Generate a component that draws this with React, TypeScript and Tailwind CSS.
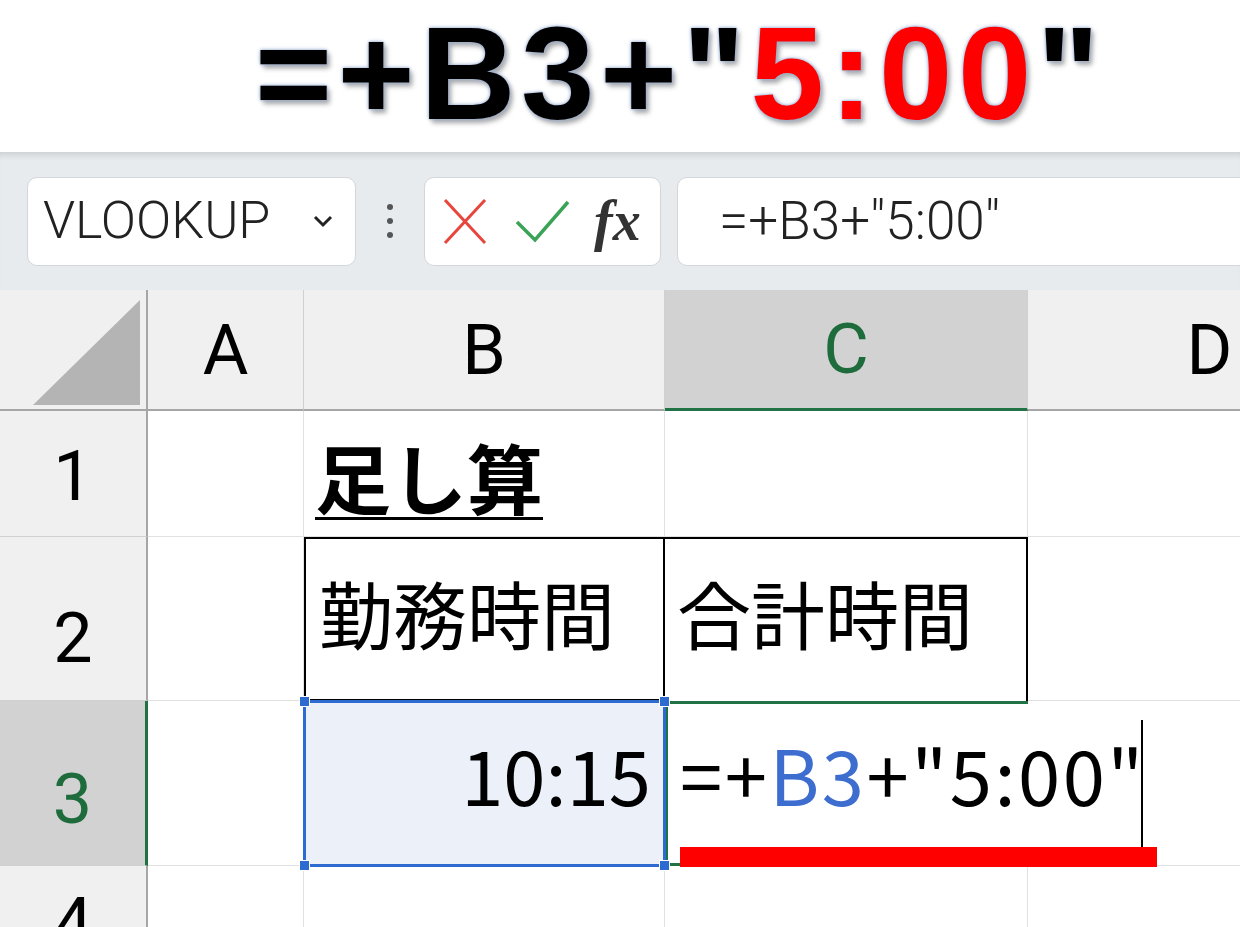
const cellFont = "font-['Noto_Sans_CJK_JP',sans-serif]"
const uiFont = "font-['Roboto','Noto_Sans',sans-serif]"

function Title() {
  return (
    <div className="h-[152px] pl-[255px] pt-[8px]">
      <div className="font-['Liberation_Sans',sans-serif] text-[132px] font-bold leading-none tracking-[5.5px] text-black [text-shadow:0_0_2px_#9fb3d6,0_0_4px_#9fb3d6,3px_4px_5px_rgba(0,0,0,0.35)]">
        =+B3+&quot;<span className="text-[#ff0000]">5:00</span>&quot;
      </div>
    </div>
  )
}

function FormulaBar() {
  return (
    <div className="flex h-[138px] items-center bg-[#e8ebee] pl-[27px] shadow-[inset_0_7px_6px_-4px_rgba(0,0,0,0.12)]">
      <div className="flex h-[89px] w-[329px] shrink-0 items-center justify-between rounded-[10px] border border-[#d3d6da] bg-white pl-[15px] pr-[22px]">
        <span className={`${uiFont} text-[52px] font-light leading-none text-[#222]`}>VLOOKUP</span>
        <svg width="20" height="13" viewBox="0 0 20 13">
          <polyline points="2,2 10,10 18,2" fill="none" stroke="#222" strokeWidth="3" />
        </svg>
      </div>

      <div className="flex w-[68px] shrink-0 flex-col items-center gap-[8px]">
        <span className="h-[6px] w-[6px] rounded-full bg-[#555]" />
        <span className="h-[6px] w-[6px] rounded-full bg-[#555]" />
        <span className="h-[6px] w-[6px] rounded-full bg-[#555]" />
      </div>

      <div className="flex h-[89px] w-[237px] shrink-0 items-center rounded-[10px] border border-[#d3d6da] bg-white pl-[18px]">
        <svg width="44" height="47" viewBox="0 0 44 47">
          <line x1="2" y1="2" x2="42" y2="45" stroke="#e8453c" strokeWidth="3" />
          <line x1="42" y1="2" x2="2" y2="45" stroke="#e8453c" strokeWidth="3" />
        </svg>
        <svg width="55" height="44" viewBox="0 0 55 44" className="ml-[28px]">
          <polyline points="2,23 20,41 53,3" fill="none" stroke="#3aa357" strokeWidth="3.5" />
        </svg>
        <span className="ml-[24px] font-['Liberation_Serif',serif] text-[56px] font-bold italic leading-none text-[#333]">
          fx
        </span>
      </div>

      <div className="ml-[16px] flex h-[89px] w-[700px] shrink-0 items-center rounded-l-[10px] border border-[#d3d6da] bg-white pl-[41px]">
        <span className={`${uiFont} text-[53px] font-light leading-none text-[#222]`}>=+B3+&quot;5:00&quot;</span>
      </div>
    </div>
  )
}

function ColHead({ label, active }: { label: string; active?: boolean }) {
  return (
    <div
      className={`flex items-center justify-center border-r border-r-[#d0d0d0] ${uiFont} text-[70px] leading-none ${
        active
          ? 'border-b-[3px] border-b-[#217346] bg-[#d2d2d2] text-[#1e6b3c]'
          : 'border-b-2 border-b-[#a6a6a6] bg-[#f0f0f0] text-black'
      }`}>
      {label}
    </div>
  )
}

function RowHead({ label, active, pb }: { label: string; active?: boolean; pb: string }) {
  return (
    <div
      className={`flex items-end justify-center border-b border-b-[#d0d0d0] ${pb} ${uiFont} text-[70px] leading-none ${
        active
          ? 'border-r-[3px] border-r-[#217346] bg-[#d2d2d2] text-[#1e6b3c]'
          : 'border-r-2 border-r-[#a6a6a6] bg-[#f0f0f0] text-black'
      }`}>
      {label}
    </div>
  )
}

function Handle({ pos }: { pos: string }) {
  return <span className={`absolute z-20 h-[11px] w-[11px] border border-white bg-[#2e6bd1] ${pos}`} />
}

function Sheet() {
  const grid = 'border-r border-b border-[#e1e1e1]'
  return (
    <div className="grid w-[1392px] grid-cols-[148px_156px_361px_363px_364px] grid-rows-[121px_126px_164px_165px_126px]">
      {/* header row */}
      <div className="border-b-2 border-r-2 border-[#a6a6a6] bg-[#f0f0f0]">
        <svg width="146" height="119" viewBox="0 0 146 119">
          <polygon points="33,115 140,10 140,115" fill="#b4b4b4" />
        </svg>
      </div>
      <ColHead label="A" />
      <ColHead label="B" />
      <ColHead label="C" active />
      <ColHead label="D" />

      {/* row 1 */}
      <RowHead label="1" pb="pb-[25px]" />
      <div className={grid} />
      <div className={`${grid} pl-[11px] pt-[27px]`}>
        <span
          className={`${cellFont} text-[76px] font-bold leading-none text-black underline decoration-[3px] underline-offset-[8px]`}>
          足し算
        </span>
      </div>
      <div className={grid} />
      <div className={grid} />

      {/* row 2 */}
      <RowHead label="2" pb="pb-[27px]" />
      <div className={grid} />
      <div className="border-2 border-black pl-[13px] pt-[36px]">
        <span className={`${cellFont} text-[74px] leading-none text-black`}>勤務時間</span>
      </div>
      <div className="border-r-2 border-t-2 border-black pl-[12px] pt-[36px]">
        <span className={`${cellFont} text-[74px] leading-none text-black`}>合計時間</span>
      </div>
      <div className={grid} />

      {/* row 3 */}
      <RowHead label="3" active pb="pb-[31px]" />
      <div className={grid} />
      <div className="relative flex justify-end bg-[#ebf0f9] pr-[14px] pt-[34px]">
        <span className={`${cellFont} text-[76px] leading-none text-black`}>10:15</span>
        <span className="absolute -inset-[1px] z-10 border-[3px] border-[#2e6bd1]" />
        <Handle pos="-left-[5px] -top-[5px]" />
        <Handle pos="-right-[5px] -top-[5px]" />
        <Handle pos="-left-[5px] -bottom-[5px]" />
        <Handle pos="-right-[5px] -bottom-[5px]" />
      </div>
      <div className="relative pl-[15px] pt-[34px]">
        <span className="absolute inset-0 border-l-[3px] border-t-[3px] border-b-[3px] border-[#217346]" />
        <span
          className={`relative whitespace-nowrap ${cellFont} text-[76px] leading-none tracking-[2.5px] text-black`}>
          =+<span className="text-[#3d6ecf]">B3</span>+&quot;5:00&quot;
        </span>
      </div>
      <div className="border-b border-[#e1e1e1]" />

      {/* row 4 */}
      <RowHead label="4" pb="pb-[33px]" />
      <div className={grid} />
      <div className={grid} />
      <div className={grid} />
      <div className={grid} />
    </div>
  )
}

export default function App() {
  return (
    <div className="relative h-[927px] w-[1240px] overflow-hidden bg-white">
      <Title />
      <FormulaBar />
      <Sheet />
      {/* editing caret and highlight bar */}
      <span className="absolute left-[1141px] top-[720px] h-[127px] w-[2px] bg-black" />
      <span className="absolute left-[680px] top-[847px] h-[20px] w-[477px] bg-[#ff0000]" />
    </div>
  )
}
